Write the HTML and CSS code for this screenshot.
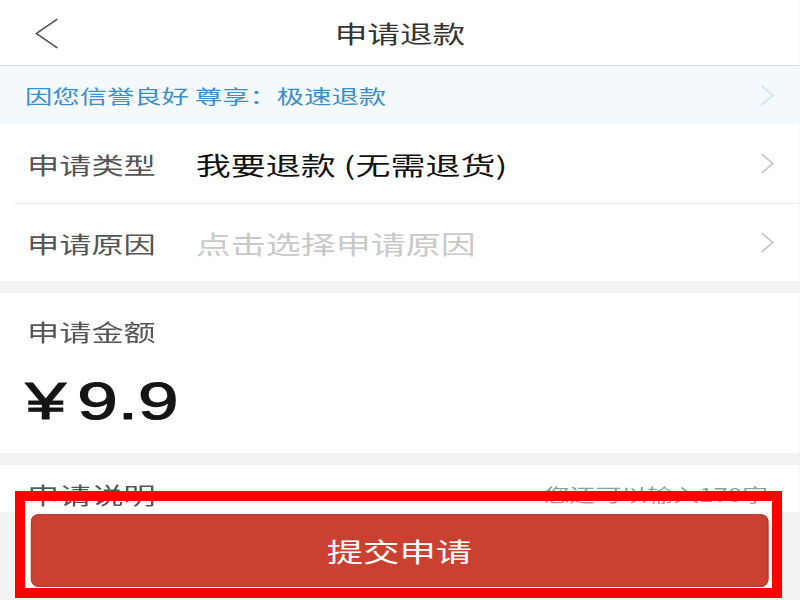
FILE: index.html
```html
<!DOCTYPE html>
<html lang="zh-CN">
<head>
  <meta charset="UTF-8">
  <title>申请退款</title>
  <link rel="stylesheet" href="styles.css">
</head>
<body>

  <div class="app">
    <div class="content">
      <header class="nav">
        <svg class="back" width="17" height="31" viewBox="0 0 17 31">
          <polyline points="16,1 1,15.5 16,30" fill="none" stroke="#555" stroke-width="1.4"/>
        </svg>
        <h1 class="nav-title">申请退款</h1>
      </header>

      <div class="notice">
        <span class="notice-text">因您信誉良好 尊享：极速退款</span>
        <svg class="arrow arrow-blue" width="10" height="21" viewBox="0 0 10 21">
          <polyline points="1,1 9,10.5 1,20" fill="none" stroke-width="1.4"/>
        </svg>
      </div>

      <div class="group">
        <div class="row">
          <span class="label">申请类型</span>
          <span class="value">我要退款 (无需退货)</span>
          <svg class="arrow" width="10" height="21" viewBox="0 0 10 21">
            <polyline points="1,1 9,10.5 1,20" fill="none" stroke-width="1.4"/>
          </svg>
        </div>
        <div class="row">
          <span class="label">申请原因</span>
          <span class="value placeholder">点击选择申请原因</span>
          <svg class="arrow" width="10" height="21" viewBox="0 0 10 21">
            <polyline points="1,1 9,10.5 1,20" fill="none" stroke-width="1.4"/>
          </svg>
        </div>
      </div>

      <div class="group amount">
        <div class="label">申请金额</div>
        <div class="price"><span class="yen">¥</span>9.9</div>
      </div>

      <div class="group desc">
        <div class="desc-head">
          <span class="label">申请说明</span>
          <span class="hint">您还可以输入170字</span>
        </div>
      </div>
    </div>

    <div class="footer">
      <div class="footer-inner">
        <button class="submit">提交申请</button>
      </div>
    </div>
  </div>

  <div class="highlight"></div>

</body>
</html>
```

FILE: styles.css
```css
html, body {
  margin: 0;
  height: 100%;
  overflow: hidden;
}

body {
  position: relative;
  background: #f3f3f3;
  font-family: "Noto Sans CJK SC", "Noto Sans", sans-serif;
}

/* the screenshot is stretched sideways, so lay out narrow and widen */
.app {
  width: 571.43px;
  height: 600px;
  display: flex;
  flex-direction: column;
  transform: scaleX(1.4);
  transform-origin: 0 0;
}

.content {
  flex: 1;
  overflow: hidden;
}

.nav {
  height: 65px;
  background: #fff;
  border-bottom: 1px solid #dcdcdc;
  display: flex;
  align-items: center;
  justify-content: center;
  position: relative;
}

.back {
  position: absolute;
  left: 24.5px;
  top: 17.5px;
}

.nav-title {
  margin: 0;
  font-size: 23.3px;
  font-weight: normal;
  color: #333;
}

.notice {
  height: 58px;
  background: #f4f9fd;
  display: flex;
  align-items: center;
  padding: 0 18.5px 0 17.9px;
}

.notice-text {
  flex: 1;
  font-size: 19.5px;
  color: #3b8fcb;
}

.arrow {
  flex: none;
  stroke: #c6c6c6;
}

.arrow-blue {
  stroke: #d2e5f0;
}

.group {
  background: #fff;
}

.group + .group {
  margin-top: 12px;
}

.row {
  height: 79px;
  margin-left: 10px;
  padding: 0 18.5px 0 9.3px;
  display: flex;
  align-items: center;
}

.row + .row {
  height: 77px;
  border-top: 1px solid #eeeeee;
}

.label {
  font-size: 23px;
  color: #555;
  line-height: 30px;
}

.row .label {
  width: 120.5px;
  flex: none;
}

.value {
  flex: 1;
  font-size: 25px;
  color: #111;
}

.value.placeholder {
  color: #c9c9c9;
}

.amount {
  height: 160px;
  padding: 23px 0 0 19.3px;
  box-sizing: border-box;
}

.price {
  margin-top: 25px;
  font-family: "Liberation Sans", Arial, sans-serif;
  font-size: 52px;
  line-height: 60px;
  color: #151515;
  -webkit-text-stroke: 1.1px #151515;
}

.yen {
  margin-left: -1px;
  margin-right: 8px;
}

.desc {
  height: 120px;
}

.desc-head {
  padding: 14px 22.8px 0 19.3px;
  display: flex;
  align-items: center;
  justify-content: space-between;
}

.hint {
  font-size: 18.5px;
  color: #9a9a9a;
}

.footer {
  height: 88px;
  flex: none;
  background: #f2f2f2;
}

.footer-inner {
  height: 77px;
  margin: 0 19.3px 0 17.86px;
  padding: 2px 3.6px 2px 4.3px;
  box-sizing: border-box;
  background: #fff;
}

.submit {
  width: 100%;
  height: 73px;
  border: none;
  border-radius: 6px / 8px;
  background: #cb4131;
  box-shadow: inset 0 0 0 1px #bd3b2c;
  color: #fff;
  font-family: "Noto Sans CJK SC", sans-serif;
  font-size: 26px;
  cursor: pointer;
}

/* red annotation frame over the submit bar */
.highlight {
  position: absolute;
  left: 15px;
  top: 491px;
  width: 767px;
  height: 107px;
  border: 10px solid #ff0000;
  box-sizing: border-box;
}
```
